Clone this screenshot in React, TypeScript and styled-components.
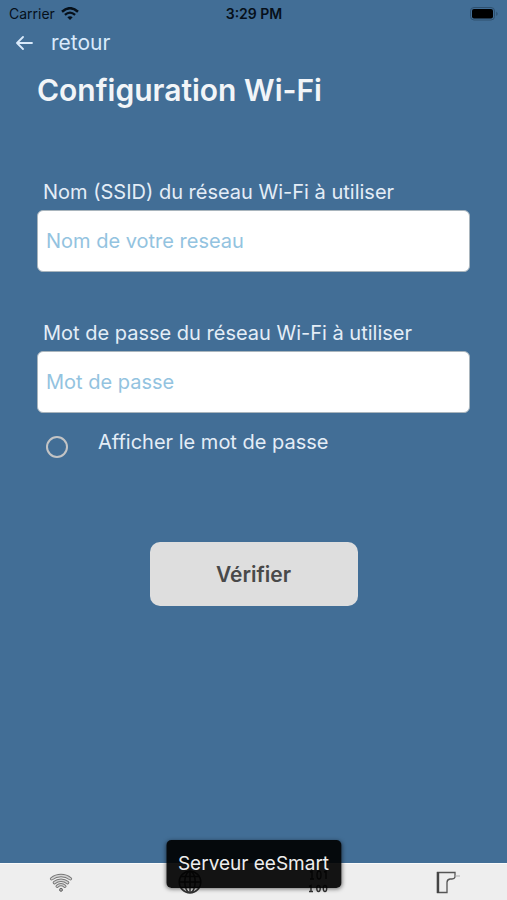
import React from "react";
import styled, { createGlobalStyle } from "styled-components";

const GlobalStyle = createGlobalStyle`
  *, *::before, *::after { box-sizing: border-box; }
  body {
    margin: 0;
    background: #426e96;
    font-family: Inter, "Liberation Sans", sans-serif;
  }
  button, input { font-family: inherit; }
`;

const Screen = styled.div`
  position: relative;
  display: flex;
  flex-direction: column;
  min-height: 100vh;
  background: #426e96;
  color: #e4edf7;
`;

const StatusBar = styled.div`
  display: grid;
  grid-template-columns: 1fr auto 1fr;
  align-items: center;
  height: 28px;
  padding: 0 8px 0 9px;
  color: #06101a;
  font-size: 14px;
  line-height: 16px;
`;

const Carrier = styled.div`
  display: flex;
  align-items: center;
  gap: 6px;
`;

const Clock = styled.time`
  font-weight: 600;
`;

const Battery = styled.svg`
  justify-self: end;
`;

const BackButton = styled.button`
  display: flex;
  align-items: center;
  align-self: flex-start;
  gap: 18px;
  height: 30px;
  padding: 0 16px;
  border: 0;
  background: none;
  color: #d9eafb;
  font-size: 21px;
  line-height: 30px;
`;

const Content = styled.main`
  display: flex;
  flex: 1;
  flex-direction: column;
  padding: 12px 37px 40px;
`;

const Title = styled.h1`
  margin: 0 0 64px;
  color: #f2f5f8;
  font-size: 30px;
  font-weight: 600;
  line-height: 40px;
`;

const Field = styled.div`
  display: flex;
  flex-direction: column;
  gap: 4px;
  margin-bottom: 43px;

  &:last-of-type { margin-bottom: 0; }
`;

const Label = styled.label`
  padding: 4px 6px 0;
  font-size: 20px;
  line-height: 28px;
`;

const TextInput = styled.input`
  width: 100%;
  height: 62px;
  padding: 0 8px;
  border: 1px solid #a9b5bd;
  border-radius: 6px;
  background: #fff;
  color: #426e96;
  font-size: 20px;

  &::placeholder { color: #93c3e0; opacity: 1; }
`;

const Form = styled.form`
  display: flex;
  flex-direction: column;
`;

const ToggleLabel = styled.label`
  display: flex;
  align-items: flex-start;
  align-self: flex-start;
  gap: 30px;
  margin: 14px 0 0 9px;
  font-size: 20px;
  line-height: 30px;
`;

const Toggle = styled.input`
  appearance: none;
  width: 22px;
  height: 22px;
  margin: 9px 0 0;
  border: 2px solid #c3c4c5;
  border-radius: 50%;

  &:checked { background: #c3c4c5; }
`;

const SubmitButton = styled.button`
  align-self: center;
  width: 208px;
  height: 64px;
  margin-top: 84px;
  border: 0;
  border-radius: 10px;
  background: #dedede;
  color: #494949;
  font-size: 21px;
  font-weight: 600;
`;

const TabBar = styled.nav`
  display: grid;
  grid-template-columns: repeat(4, 1fr);
  height: 37px;
  border-top: 1px solid #fafafa;
  background: #eee;
`;

const Tab = styled.button`
  display: flex;
  align-items: center;
  justify-content: center;
  padding: 0;
  border: 0;
  background: none;
  color: #333;
`;

const Toast = styled.div`
  position: absolute;
  bottom: 12px;
  left: 50%;
  transform: translateX(-50%);
  padding: 10px 12px;
  border-radius: 5px;
  background: rgba(0, 0, 0, 0.92);
  box-shadow: 0 1px 4px rgba(0, 0, 0, 0.55);
  color: #eee;
  font-size: 19px;
  line-height: 28px;
  white-space: nowrap;
`;

const StatusWifi = () => (
  <svg width="18" height="14" viewBox="0 0 18 14" fill="none" stroke="currentColor" aria-hidden="true">
    <path d="M1 4.7Q9-2.3 17 4.7" strokeWidth="2.5" />
    <path d="M3.9 7.8Q9 3.4 14.1 7.8" strokeWidth="2.3" />
    <path d="M6.3 10.3Q9 8 11.7 10.3L9 13Z" fill="currentColor" stroke="none" />
  </svg>
);

const BatteryIcon = () => (
  <Battery width="29" height="14" viewBox="0 0 29 14" role="img" aria-label="Batterie">
    <rect x="0.5" y="0.5" width="24" height="12.5" rx="3.5" fill="none" stroke="#2e506f" />
    <rect x="2" y="2" width="21" height="9.5" rx="2" fill="#000" />
    <path d="M26.3 4.5Q29 6.8 26.3 9Z" fill="#2e506f" />
  </Battery>
);

const ArrowLeft = () => (
  <svg width="17" height="16" viewBox="0 0 17 16" fill="none" stroke="currentColor" strokeWidth="1.8" strokeLinecap="round" strokeLinejoin="round" aria-hidden="true">
    <path d="M16 8H1.5M7 2L1 8l6 6" />
  </svg>
);

const wifiBands = "M2.6 7.8A15 15 0 0 1 21.4 7.8M5.4 11.6A10.2 10.2 0 0 1 18.6 11.6M8.2 15.2A5.8 5.8 0 0 1 15.8 15.2";

const WifiOutline = () => (
  <svg width="28" height="22" viewBox="0 0 28 22" fill="none" aria-hidden="true">
    <path d={wifiBands} stroke="#777" strokeWidth="3.4" strokeLinecap="round" />
    <path d={wifiBands} stroke="#d4d4d4" strokeWidth="1.5" strokeLinecap="round" />
    <circle cx="12" cy="18.8" r="1.5" fill="#aaa" stroke="#666" />
  </svg>
);

const Globe = () => (
  <svg width="24" height="24" viewBox="0 0 24 24" fill="none" stroke="currentColor" strokeWidth="1.5" aria-hidden="true">
    <circle cx="12" cy="12" r="10.8" />
    <ellipse cx="12" cy="12" rx="5.2" ry="10.8" />
    <path d="M12 1v22M1.2 12h21.6M3 6.5h18M3 17.5h18" />
  </svg>
);

const Digits = () => (
  <svg width="22" height="24" viewBox="0 0 22 24" fill="none" stroke="currentColor" strokeWidth="1.4" aria-hidden="true">
    <path d="M4 2l2-1v8M4 9h4M18 2l2-1v8" />
    <ellipse cx="13" cy="5" rx="2" ry="4" />
    <path d="M3 16.5l2-1v6M3 21.5h4" />
    <ellipse cx="12.5" cy="18.5" rx="1.7" ry="3" />
    <ellipse cx="19" cy="18.5" rx="1.7" ry="3" />
  </svg>
);

const Device = () => (
  <svg width="32" height="24" viewBox="0 0 32 24" fill="none" aria-hidden="true">
    <path d="M9.5 2.5H27V7Q26.5 9 24 9H22Q19 9.5 19 12.5V22.5H9.5Z" stroke="#555" strokeWidth="1.3" />
    <path d="M10 2v21" stroke="#444" strokeWidth="2.4" />
    <path d="M27 6h5" stroke="#aaa" />
  </svg>
);

const tabs = [
  { name: "Wi-Fi", Icon: WifiOutline },
  { name: "Serveur eeSmart", Icon: Globe },
  { name: "Données", Icon: Digits },
  { name: "Appareil", Icon: Device },
];

export default function App() {
  const [visible, setVisible] = React.useState(false);

  return (
    <>
      <GlobalStyle />
      <Screen>
        <StatusBar>
          <Carrier>Carrier <StatusWifi /></Carrier>
          <Clock>3:29 PM</Clock>
          <BatteryIcon />
        </StatusBar>
        <BackButton type="button"><ArrowLeft />retour</BackButton>
        <Content>
          <Title>Configuration Wi-Fi</Title>
          <Form onSubmit={(event) => event.preventDefault()}>
            <Field>
              <Label htmlFor="ssid">Nom (SSID) du réseau Wi-Fi à utiliser</Label>
              <TextInput id="ssid" placeholder="Nom de votre reseau" />
            </Field>
            <Field>
              <Label htmlFor="password">Mot de passe du réseau Wi-Fi à utiliser</Label>
              <TextInput id="password" type={visible ? "text" : "password"} placeholder="Mot de passe" />
            </Field>
            <ToggleLabel>
              <Toggle type="checkbox" checked={visible} onChange={(event) => setVisible(event.target.checked)} />
              Afficher le mot de passe
            </ToggleLabel>
            <SubmitButton type="submit">Vérifier</SubmitButton>
          </Form>
        </Content>
        <TabBar>
          {tabs.map(({ name, Icon }) => (
            <Tab key={name} type="button" aria-label={name}><Icon /></Tab>
          ))}
        </TabBar>
        <Toast role="status">Serveur eeSmart</Toast>
      </Screen>
    </>
  );
}
